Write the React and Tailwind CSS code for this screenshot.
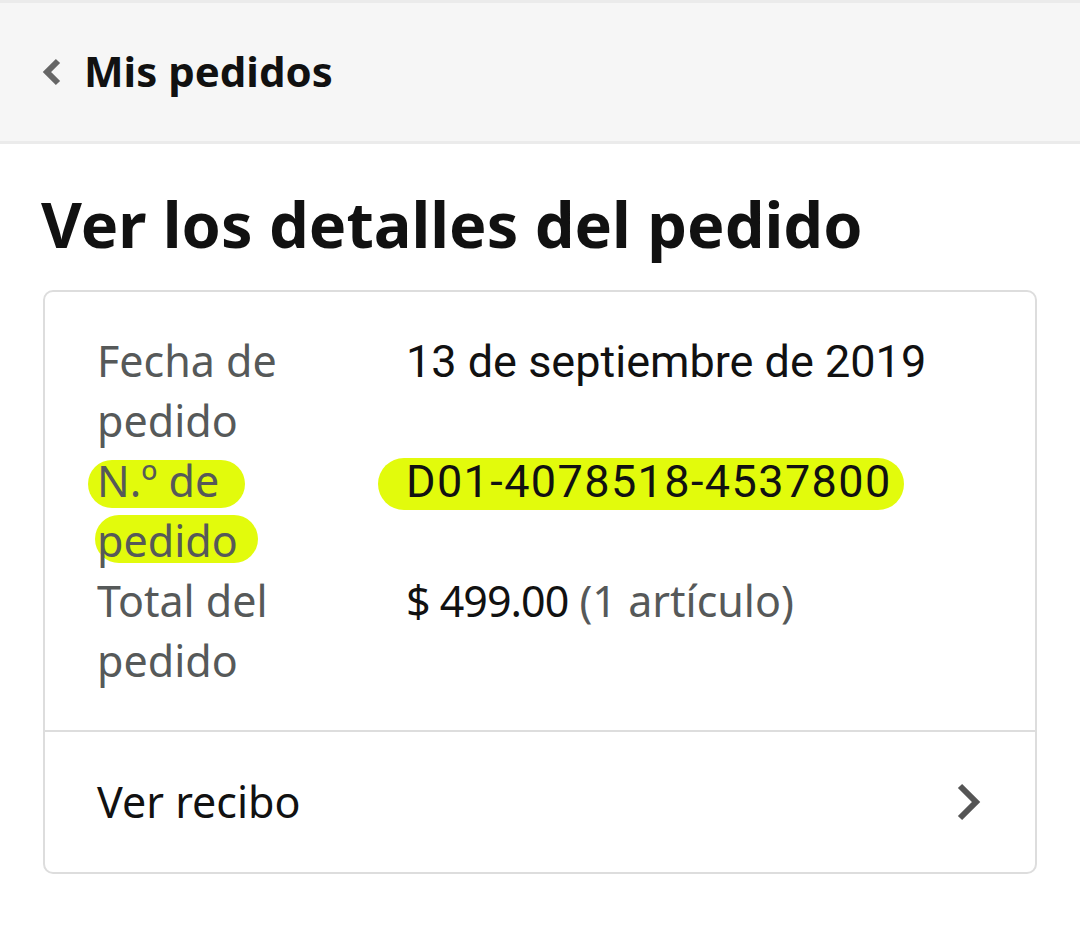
import React from 'react';

const Row = ({ label, children }) => (
  <div className="flex">
    <div className="w-[309px] shrink-0 pr-[90px] text-[#565959]">{label}</div>
    <div className="flex-1">{children}</div>
  </div>
);

// resaltado tipo marcador detrás del texto
const Marker = ({ children, className }) => (
  <span className="relative inline-block">
    <span className={`absolute bg-[#e2fb0c] rounded-full ${className}`} />
    <span className="relative">{children}</span>
  </span>
);

export default function App() {
  return (
    <div className="min-h-screen bg-white" style={{ fontFamily: '"Noto Sans", sans-serif' }}>
      {/* barra superior */}
      <div className="h-[144px] bg-[#f6f6f6] border-t-[3px] border-b-[3px] border-[#ebebeb] flex items-center pl-[38px]">
        <svg width="26" height="32" viewBox="0 0 26 32" className="mr-[20px]">
          <path d="M20 5 L9 16 L20 27" fill="none" stroke="#666" strokeWidth="6" />
        </svg>
        <span className="text-[42px] font-bold text-[#111] leading-none mb-[2px]">Mis pedidos</span>
      </div>

      <h1 className="px-[41px] pt-[42px] pb-[28px] text-[63px] font-bold text-[#111] leading-[76px]">
        Ver los detalles del pedido
      </h1>

      <div className="mx-[43px] border-2 border-[#dddddd] rounded-[10px]">
        <div className="pl-[52px] pr-[40px] pt-[39px] pb-[39px] text-[43px] leading-[60px]">
          <Row label="Fecha de pedido">
            <span className="text-[#111] text-[45px]" style={{ fontFamily: 'Roboto, sans-serif' }}>
              13 de septiembre de 2019
            </span>
          </Row>
          <Row
            label={
              <>
                <div>
                  <Marker className="-left-[9px] -right-[26px] top-[9px] h-[48px]">N.º de</Marker>
                </div>
                <div>
                  <Marker className="-left-[2px] -right-[20px] top-[4px] h-[48px]">pedido</Marker>
                </div>
              </>
            }
          >
            <Marker className="-left-[28px] -right-[12px] top-[7px] h-[52px]">
              <span className="text-[#111] text-[45px] tracking-[1.4px]" style={{ fontFamily: 'Roboto, sans-serif' }}>
                D01-4078518-4537800
              </span>
            </Marker>
          </Row>
          <Row label="Total del pedido">
            <span className="text-[#111] tracking-[-1px]">$ 499.00</span>{' '}
            <span className="text-[#565959]">(1 artículo)</span>
          </Row>
        </div>
        <div className="border-t-2 border-[#dddddd] h-[142px] flex items-center justify-between pl-[52px] pr-[52px]">
          <span className="text-[43px] text-[#111]">Ver recibo</span>
          <svg width="30" height="40" viewBox="0 0 30 40">
            <path d="M7 4 L23 20 L7 36" fill="none" stroke="#555" strokeWidth="6" />
          </svg>
        </div>
      </div>
    </div>
  );
}
